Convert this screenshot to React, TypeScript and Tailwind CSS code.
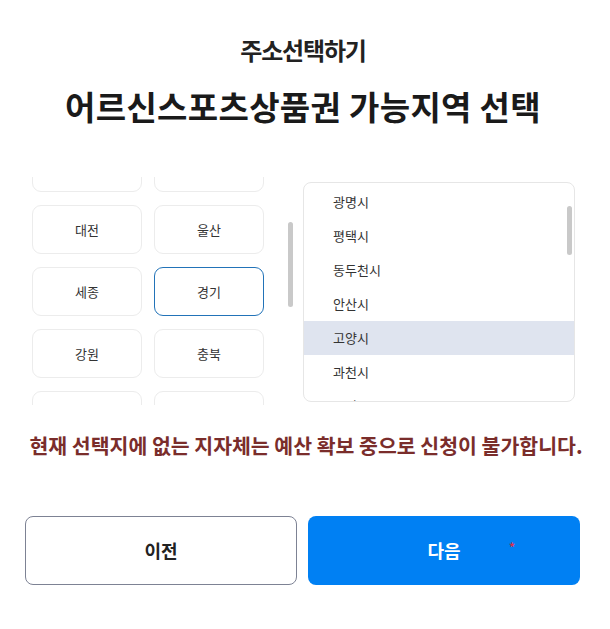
const regions = [
  ["부산", "대구"],
  ["대전", "울산"],
  ["세종", "경기"],
  ["강원", "충북"],
  ["충남", "전북"],
];

const cities = ["광명시", "평택시", "동두천시", "안산시", "고양시", "과천시", "구리시"];

export default function App() {
  return (
    <div
      className="w-[610px] h-[629px] bg-white text-[#222] overflow-hidden"
      style={{ fontFamily: '"Noto Sans CJK KR", "Noto Sans", sans-serif' }}
    >
      <div className="ml-[25px] w-[556px]">
        <div className="h-[170px] pt-[35px] flex flex-col items-center">
          <h2 className="text-[24px] leading-[30px] font-semibold tracking-[-0.05em] text-[#222]">주소선택하기</h2>
          <h1 className="mt-[19px] text-[33px] leading-[44px] font-bold tracking-[0.01em] text-[#1a1a1a]">
            어르신스포츠상품권 가능지역 선택
          </h1>
        </div>

        <div className="h-[235px] flex">
          <div className="relative w-[270px] mt-[7px] h-[228px] overflow-hidden pl-[7px]">
            <div className="-mt-[34px] flex flex-col gap-[13px]">
              {regions.map((row, i) => (
                <div key={i} className="flex gap-[12px]">
                  {row.map((name) => (
                    <button
                      key={name}
                      className={`w-[110px] h-[49px] rounded-[9px] border bg-white text-[13px] text-[#333] ${
                        name === "경기" ? "border-[#2273b8]" : "border-[#ececec]"
                      }`}
                    >
                      {name}
                    </button>
                  ))}
                </div>
              ))}
            </div>
            <div className="absolute left-[263px] top-[45px] w-[5px] h-[85px] rounded-full bg-[#c9c9c9]" />
          </div>

          <div className="relative ml-[8px] mt-[12px] w-[272px] h-[220px] rounded-[8px] border border-[#e6e6e6] overflow-hidden pt-[2px]">
            {cities.map((c) => (
              <div
                key={c}
                className={`h-[34px] pl-[29px] flex items-center text-[13px] text-[#333] ${
                  c === "고양시" ? "bg-[#dfe4ef]" : ""
                }`}
              >
                {c}
              </div>
            ))}
            <div className="absolute left-[263px] top-[23px] w-[5px] h-[49px] rounded-full bg-[#c9c9c9]" />
          </div>
        </div>

        <p className="mt-[25px] -mx-[10px] pl-[6px] whitespace-nowrap text-center text-[20.5px] leading-[30px] font-semibold text-[#7a2d2b]">
          현재 선택지에 없는 지자체는 예산 확보 중으로 신청이 불가합니다.
        </p>

        <div className="mt-[56px] flex gap-[11px]">
          <button className="w-[272px] h-[69px] rounded-[8px] border border-[#7d8294] bg-white text-[18px] font-bold text-[#222]">
            이전
          </button>
          <button className="relative w-[272px] h-[69px] rounded-[8px] bg-[#0080f3] text-[18px] font-bold text-white">
            다음
            <span className="absolute left-[201px] top-[25px] text-[12px] leading-none font-bold text-[#d6304e]">*</span>
          </button>
        </div>
      </div>
    </div>
  );
}
